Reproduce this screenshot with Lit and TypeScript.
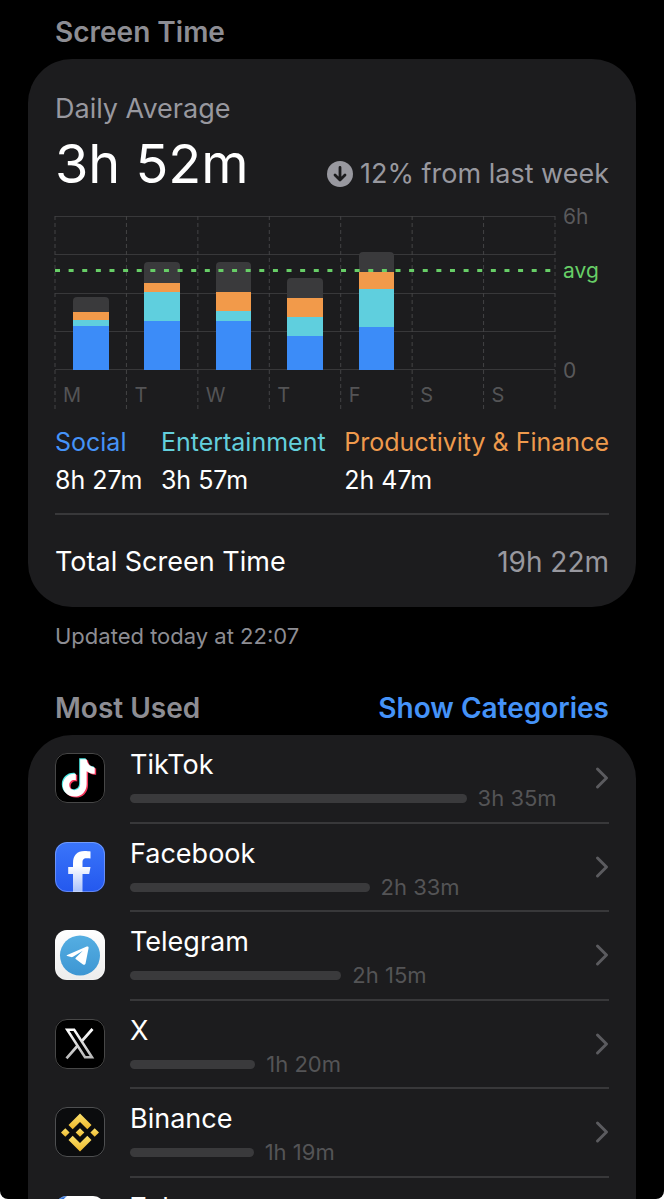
import { LitElement, html, css, svg } from "lit";
import { customElement, property } from "lit/decorators.js";

interface Day {
  label: string;
  social: number;
  entertainment: number;
  productivity: number;
  other: number;
}

interface AppUsage {
  id: string;
  name: string;
  time: string;
  minutes: number;
}

const DAYS: Day[] = [
  { label: "M", social: 44, entertainment: 6, productivity: 8, other: 15 },
  { label: "T", social: 49, entertainment: 29, productivity: 9, other: 21 },
  { label: "W", social: 49, entertainment: 10, productivity: 19, other: 30 },
  { label: "T", social: 34, entertainment: 19, productivity: 19, other: 20 },
  { label: "F", social: 43, entertainment: 38, productivity: 17, other: 20 },
  { label: "S", social: 0, entertainment: 0, productivity: 0, other: 0 },
  { label: "S", social: 0, entertainment: 0, productivity: 0, other: 0 },
];

const APPS: AppUsage[] = [
  { id: "tiktok", name: "TikTok", time: "3h 35m", minutes: 215 },
  { id: "facebook", name: "Facebook", time: "2h 33m", minutes: 153 },
  { id: "telegram", name: "Telegram", time: "2h 15m", minutes: 135 },
  { id: "x", name: "X", time: "1h 20m", minutes: 80 },
  { id: "binance", name: "Binance", time: "1h 19m", minutes: 79 },
];

const NOTE =
  "M24.5 7h6c.4 4.200 3 7.200 7.500 7.700v5.800c-2.900 0-5.400-.9-7.500-2.400v11.800c0 7-4.900 11.700-11.200 11.700-6.200 0-10.900-4.500-10.900-10.500 0-6.600 5.400-11.300 12.100-10.600v6.100c-3.300-.9-6.100 1.300-6.100 4.300 0 2.800 2.200 4.800 4.800 4.800 3.100 0 5.300-2.200 5.300-5.600z";

const LOGOS: Record<string, unknown> = {
  tiktok: svg`
    <rect width="50" height="50" rx="12" fill="#000"/>
    <g transform="translate(-1.300 -1.400) scale(1.08)">
      <path d=${NOTE} transform="translate(-.9 -.8)" fill="#4de8e4"/>
      <path d=${NOTE} transform="translate(1.300 1)" fill="#f5365c"/>
      <path d=${NOTE} fill="#fff"/>
    </g>`,
  facebook: svg`
    <defs>
      <linearGradient id="fb" x2="0" y2="1"><stop stop-color="#3a75fa"/><stop offset="1" stop-color="#2458ee"/></linearGradient>
      <linearGradient id="ff" x2="0" y2="1"><stop offset=".35" stop-color="#fff"/><stop offset="1" stop-color="#a9c1fb"/></linearGradient>
    </defs>
    <rect width="50" height="50" rx="12" fill="url(#fb)"/>
    <path d="M18 50V32h-4.800v-7H18v-3.500C18 13.300 22 9 29.500 9c2.500 0 4.500.2 6 .6v7c-1-.2-2.400-.3-4-.3-3.200 0-4 1.500-4 4.700v4h8l-1.300 7h-6.700v18z" fill="url(#ff)"/>`,
  telegram: svg`
    <defs>
      <linearGradient id="tg" x2="0" y2="1"><stop stop-color="#55aee2"/><stop offset="1" stop-color="#3d96d3"/></linearGradient>
      <linearGradient id="tb" x2="0" y2="1"><stop stop-color="#fff"/><stop offset="1" stop-color="#ececec"/></linearGradient>
    </defs>
    <rect width="50" height="50" rx="12" fill="url(#tb)"/>
    <circle cx="25" cy="25.500" r="20" fill="url(#tg)"/>
    <path d="M12.200 25 31.800 16.600c1.200-.5 2 .2 1.800 1.400l-3 15.300c-.3 1.500-1.400 1.900-2.600 1.100l-7-5.100c-.7-.6-.7-1.300 0-1.900l6.800-6.600-9.800 6c-.7.4-1.300.5-2 .3l-3.700-1c-.9-.3-.9-.8-.1-1.100z" fill="#fff"/>`,
  x: svg`
    <defs><linearGradient id="xg" x2="0" y2="1"><stop stop-color="#fff"/><stop offset="1" stop-color="#b9b9b9"/></linearGradient></defs>
    <rect width="50" height="50" rx="12" fill="#000"/>
    <g fill="none" stroke="url(#xg)">
      <path d="M12.200 10.800h7L37 38.200h-7z" stroke-width="2.500"/>
      <path d="M37.500 10 26.500 22.500M22.800 26.500 11.500 39.300" stroke-width="2.700"/>
    </g>`,
  binance: svg`
    <defs><linearGradient id="bn" x2="0" y2="1"><stop stop-color="#fbe06c"/><stop offset="1" stop-color="#efb92c"/></linearGradient></defs>
    <rect width="50" height="50" rx="12" fill="#0b0c0e"/>
    <g fill="url(#bn)">
      <path d="M25 6.500 36.500 18l-4.200 4.200L25 15l-7.300 7.200-4.200-4.200z"/>
      <path d="M25 44.500 13.500 33l4.200-4.200L25 36l7.300-7.200 4.200 4.200z"/>
      <path d="m25 21.200 4.300 4.300-4.300 4.300-4.300-4.300z"/>
      <path d="m10.300 21.200 4.300 4.300-4.300 4.300L6 25.500z"/>
      <path d="m39.700 21.200 4.300 4.300-4.300 4.300-4.300-4.300z"/>
    </g>`,
  zalo: svg`
    <rect width="50" height="50" rx="12" fill="#fff"/>
    <path d="M0 12C0 5 5 0 12 0c-5 4-8 9-8 18v32H0z" fill="#2f6fd6"/>`,
};

APPS.push({ id: "zalo", name: "Zalo", time: "", minutes: 62 });

@customElement("usage-chart")
export class UsageChart extends LitElement {
  @property({ attribute: false }) days: Day[] = [];

  static styles = css`
    :host { display: block; }
    .chart { display: grid; grid-template-columns: minmax(0, 1fr) 54px; }
    .area { position: relative; display: grid; }
    .grid { grid-area: 1 / 1; height: 194px; width: 100%; display: block; overflow: visible; }
    .line { stroke: #38383a; stroke-width: 1; }
    .tick { stroke: #434345; stroke-width: 1; stroke-dasharray: 4 3; }
    .days { grid-area: 1 / 1; display: grid; grid-template-columns: repeat(7, minmax(0, 1fr)); }
    .day { display: flex; flex-direction: column; }
    .plot { height: 154px; display: flex; flex-direction: column; justify-content: flex-end; align-items: center; }
    .bar { width: 50%; display: flex; flex-direction: column; border-radius: 4px 4px 0 0; overflow: hidden; }
    .other { background: #3a3a3c; }
    .productivity { background: #f29a4a; }
    .entertainment { background: #5fcfde; }
    .social { background: #3c8cf8; }
    .name { padding-left: 8px; font-size: 20px; line-height: 24px; margin-top: 13px; color: #545456; }
    .avg-line { position: absolute; left: 0; top: 53px; width: 100%; height: 3px; }
    .avg-line line { stroke: #67ce67; stroke-width: 3; stroke-dasharray: 5 8.620; }
    .scale { display: flex; flex-direction: column; height: 178px; margin: -11px 0; padding-left: 8px;
      font-size: 21px; line-height: 24px; color: #59595b; }
    .avg { color: #67ce67; margin-top: 30px; }
    .zero { margin-top: auto; }
  `;

  render() {
    return html`
      <div class="chart">
        <div class="area">
          <svg class="grid" aria-hidden="true">
            ${[0, 1, 2, 3, 4].map((i) => svg`<line class="line" x1="0" x2="100%" y1=${Math.round(i * 38.300) + 0.500} y2=${Math.round(i * 38.300) + 0.500}/>`)}
            ${[0, 1, 2, 3, 4, 5, 6, 7].map((i) => svg`<line class="tick" x1="${(i * 100) / 7}%" x2="${(i * 100) / 7}%" y1="0" y2="194"/>`)}
          </svg>
          <div class="days">
            ${this.days.map(
              (d) => html`<div class="day">
                <div class="plot">
                  <div class="bar">
                    <div class="other" style="height:${d.other}px"></div>
                    <div class="productivity" style="height:${d.productivity}px"></div>
                    <div class="entertainment" style="height:${d.entertainment}px"></div>
                    <div class="social" style="height:${d.social}px"></div>
                  </div>
                </div>
                <span class="name">${d.label}</span>
              </div>`
            )}
          </div>
          <svg class="avg-line" aria-hidden="true"><line x1="0" x2="100%" y1="1.500" y2="1.500"/></svg>
        </div>
        <div class="scale">
          <span>6h</span>
          <span class="avg">avg</span>
          <span class="zero">0</span>
        </div>
      </div>
    `;
  }
}

@customElement("app-root")
export class AppRoot extends LitElement {
  static styles = css`
    :host { display: block; background: #fff; color: #fff;
      font-family: Inter, "Liberation Sans", sans-serif; font-size: 27px; line-height: 34px; }
    * { box-sizing: border-box; }
    main { height: 100vh; overflow: hidden; padding: 15px 28px 0; background: #000; border-radius: 0 0 8px 8px; }
    h2, p, ul, dl, dd { margin: 0; padding: 0; font-weight: 400; }
    .heading { display: flex; justify-content: space-between; align-items: center; padding: 0 27px; }
    .heading h2 { font-size: 28px; font-weight: 600; color: #8d8d93; }
    .link { font: inherit; font-size: 28px; font-weight: 600; color: #4593f8; background: none; border: 0; padding: 0; cursor: pointer; }
    .card { background: #1c1c1e; border-radius: 44px; padding: 33px 27px 28px; margin-top: 10px; }
    .muted { color: #98989f; }
    .summary { display: flex; justify-content: space-between; align-items: flex-end; height: 73px; }
    .big { font-size: 54px; line-height: 70px; }
    .trend { display: flex; align-items: center; gap: 7px; padding-bottom: 8px; }
    .trend svg { width: 26px; height: 26px; flex: none; }
    usage-chart { margin-top: 17px; }
    .legend { display: flex; justify-content: space-between; font-size: 25px; line-height: 38px; margin-top: 13px; }
    .social { color: #4593f8; }
    .entertainment { color: #63cfdc; }
    .productivity { color: #ee9a4d; }
    .total { display: flex; justify-content: space-between; border-top: 2px solid #38383a; margin-top: 14px; padding-top: 30px; }
    .total .muted { font-size: 28px; }
    .note { font-size: 22px; line-height: 28px; color: #8d8d93; padding: 15px 27px 0; }
    .most { margin-top: 41px; }
    .apps { list-style: none; background: #1c1c1e; border-radius: 44px 44px 0 0; margin-top: 10px; padding: 0 27px; }
    .app { display: flex; width: 100%; font: inherit; text-align: left; color: inherit; background: none; border: 0; padding: 0; cursor: pointer; }
    .logo { width: 50px; height: 50px; flex: none; margin-top: 18px; }
    .edge { fill: none; stroke: #fff; stroke-opacity: .28; }
    .info { flex: 1; min-width: 0; height: 89px; margin-left: 25px; padding-top: 13px; border-bottom: 2px solid #38383a;
      display: grid; grid-template-columns: minmax(0, 1fr) 20px; }
    li:nth-child(even) .info { height: 88px; }
    .app-name { display: block; }
    .usage { display: flex; align-items: center; gap: 11px; font-size: 22px; line-height: 32px; color: #545456; padding-right: 34px; white-space: nowrap; }
    .track { height: 9px; border-radius: 5px; background: #3a3a3c; flex: none; }
    .chevron { width: 20px; height: 24px; margin-top: 18px; }
  `;

  render() {
    return html`
      <main>
        <div class="heading"><h2>Screen Time</h2></div>
        <section class="card">
          <p class="muted">Daily Average</p>
          <div class="summary">
            <span class="big">3h 52m</span>
            <span class="trend muted">
              <svg viewBox="0 0 26 26" aria-hidden="true">
                <circle cx="13" cy="13" r="13" fill="#98989f"/>
                <path d="M13 6.500v12M8 14l5 5 5-5" fill="none" stroke="#1c1c1e" stroke-width="2.800" stroke-linecap="round" stroke-linejoin="round"/>
              </svg>
              <span>12% from last week</span>
            </span>
          </div>
          <usage-chart .days=${DAYS}></usage-chart>
          <dl class="legend">
            <div><dt class="social">Social</dt><dd>8h 27m</dd></div>
            <div><dt class="entertainment">Entertainment</dt><dd>3h 57m</dd></div>
            <div><dt class="productivity">Productivity &amp; Finance</dt><dd>2h 47m</dd></div>
          </dl>
          <div class="total"><span>Total Screen Time</span><span class="muted">19h 22m</span></div>
        </section>
        <p class="note">Updated today at 22:07</p>
        <div class="heading most">
          <h2>Most Used</h2>
          <button class="link" type="button">Show Categories</button>
        </div>
        <ul class="apps">
          ${APPS.map(
            (a) => html`<li>
              <button class="app" type="button">
                <svg class="logo" viewBox="0 0 50 50" aria-hidden="true">
                  ${LOGOS[a.id]}
                  <rect class="edge" x=".5" y=".5" width="49" height="49" rx="11.500"/>
                </svg>
                <span class="info">
                  <span>
                    <span class="app-name">${a.name}</span>
                    <span class="usage">
                      <span class="track" style="width:${(a.minutes / 215) * 79.200}%"></span>
                      <span>${a.time}</span>
                    </span>
                  </span>
                  <svg class="chevron" viewBox="0 0 20 24" aria-hidden="true">
                    <path d="m8.500 3 9 9-9 9" fill="none" stroke="#5b5b5f" stroke-width="3" stroke-linecap="round" stroke-linejoin="round"/>
                  </svg>
                </span>
              </button>
            </li>`
          )}
        </ul>
      </main>
    `;
  }
}
